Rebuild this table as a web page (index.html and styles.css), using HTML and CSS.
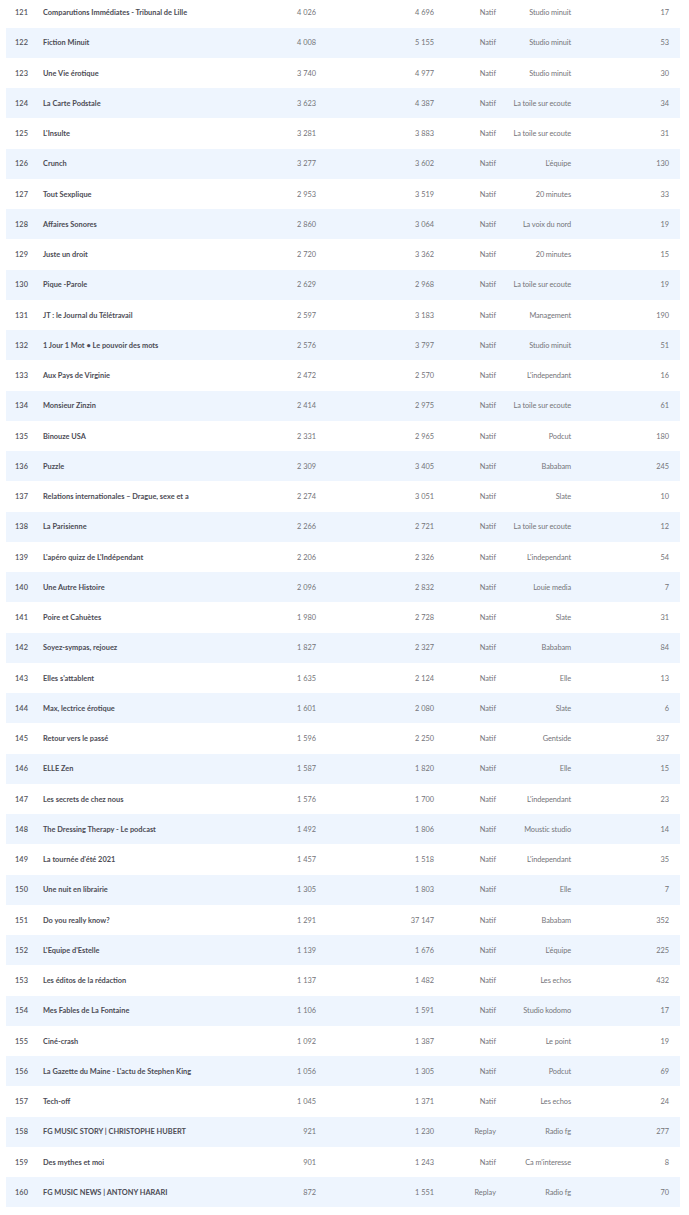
FILE: index.html
```html
<!DOCTYPE html>
<html lang="fr">
<head>
<meta charset="utf-8">
<title>Classement podcasts</title>
<link rel="stylesheet" href="styles.css">
</head>
<body>
<div class="table">
<div class="row"><span class="rank">121</span><span class="title">Comparutions Immédiates - Tribunal de Lille</span><span class="num">4&#8239;026</span><span class="num">4&#8239;696</span><span class="type">Natif</span><span class="pub">Studio minuit</span><span class="num">17</span></div>
<div class="row"><span class="rank">122</span><span class="title">Fiction Minuit</span><span class="num">4&#8239;008</span><span class="num">5&#8239;155</span><span class="type">Natif</span><span class="pub">Studio minuit</span><span class="num">53</span></div>
<div class="row"><span class="rank">123</span><span class="title">Une Vie érotique</span><span class="num">3&#8239;740</span><span class="num">4&#8239;977</span><span class="type">Natif</span><span class="pub">Studio minuit</span><span class="num">30</span></div>
<div class="row"><span class="rank">124</span><span class="title">La Carte Podstale</span><span class="num">3&#8239;623</span><span class="num">4&#8239;387</span><span class="type">Natif</span><span class="pub">La toile sur ecoute</span><span class="num">34</span></div>
<div class="row"><span class="rank">125</span><span class="title">L'Insulte</span><span class="num">3&#8239;281</span><span class="num">3&#8239;883</span><span class="type">Natif</span><span class="pub">La toile sur ecoute</span><span class="num">31</span></div>
<div class="row"><span class="rank">126</span><span class="title">Crunch</span><span class="num">3&#8239;277</span><span class="num">3&#8239;602</span><span class="type">Natif</span><span class="pub">L'équipe</span><span class="num">130</span></div>
<div class="row"><span class="rank">127</span><span class="title">Tout Sexplique</span><span class="num">2&#8239;953</span><span class="num">3&#8239;519</span><span class="type">Natif</span><span class="pub">20 minutes</span><span class="num">33</span></div>
<div class="row"><span class="rank">128</span><span class="title">Affaires Sonores</span><span class="num">2&#8239;860</span><span class="num">3&#8239;064</span><span class="type">Natif</span><span class="pub">La voix du nord</span><span class="num">19</span></div>
<div class="row"><span class="rank">129</span><span class="title">Juste un droit</span><span class="num">2&#8239;720</span><span class="num">3&#8239;362</span><span class="type">Natif</span><span class="pub">20 minutes</span><span class="num">15</span></div>
<div class="row"><span class="rank">130</span><span class="title">Pique -Parole</span><span class="num">2&#8239;629</span><span class="num">2&#8239;968</span><span class="type">Natif</span><span class="pub">La toile sur ecoute</span><span class="num">19</span></div>
<div class="row"><span class="rank">131</span><span class="title">JT : le Journal du Télétravail</span><span class="num">2&#8239;597</span><span class="num">3&#8239;183</span><span class="type">Natif</span><span class="pub">Management</span><span class="num">190</span></div>
<div class="row"><span class="rank">132</span><span class="title">1 Jour 1 Mot • Le pouvoir des mots</span><span class="num">2&#8239;576</span><span class="num">3&#8239;797</span><span class="type">Natif</span><span class="pub">Studio minuit</span><span class="num">51</span></div>
<div class="row"><span class="rank">133</span><span class="title">Aux Pays de Virginie</span><span class="num">2&#8239;472</span><span class="num">2&#8239;570</span><span class="type">Natif</span><span class="pub">L'independant</span><span class="num">16</span></div>
<div class="row"><span class="rank">134</span><span class="title">Monsieur Zinzin</span><span class="num">2&#8239;414</span><span class="num">2&#8239;975</span><span class="type">Natif</span><span class="pub">La toile sur ecoute</span><span class="num">61</span></div>
<div class="row"><span class="rank">135</span><span class="title">Binouze USA</span><span class="num">2&#8239;331</span><span class="num">2&#8239;965</span><span class="type">Natif</span><span class="pub">Podcut</span><span class="num">180</span></div>
<div class="row"><span class="rank">136</span><span class="title">Puzzle</span><span class="num">2&#8239;309</span><span class="num">3&#8239;405</span><span class="type">Natif</span><span class="pub">Bababam</span><span class="num">245</span></div>
<div class="row"><span class="rank">137</span><span class="title">Relations internationales – Drague, sexe et a</span><span class="num">2&#8239;274</span><span class="num">3&#8239;051</span><span class="type">Natif</span><span class="pub">Slate</span><span class="num">10</span></div>
<div class="row"><span class="rank">138</span><span class="title">La Parisienne</span><span class="num">2&#8239;266</span><span class="num">2&#8239;721</span><span class="type">Natif</span><span class="pub">La toile sur ecoute</span><span class="num">12</span></div>
<div class="row"><span class="rank">139</span><span class="title">L'apéro quizz de L'Indépendant</span><span class="num">2&#8239;206</span><span class="num">2&#8239;326</span><span class="type">Natif</span><span class="pub">L'independant</span><span class="num">54</span></div>
<div class="row"><span class="rank">140</span><span class="title">Une Autre Histoire</span><span class="num">2&#8239;096</span><span class="num">2&#8239;832</span><span class="type">Natif</span><span class="pub">Louie media</span><span class="num">7</span></div>
<div class="row"><span class="rank">141</span><span class="title">Poire et Cahuètes</span><span class="num">1&#8239;980</span><span class="num">2&#8239;728</span><span class="type">Natif</span><span class="pub">Slate</span><span class="num">31</span></div>
<div class="row"><span class="rank">142</span><span class="title">Soyez-sympas, rejouez</span><span class="num">1&#8239;827</span><span class="num">2&#8239;327</span><span class="type">Natif</span><span class="pub">Bababam</span><span class="num">84</span></div>
<div class="row"><span class="rank">143</span><span class="title">Elles s'attablent</span><span class="num">1&#8239;635</span><span class="num">2&#8239;124</span><span class="type">Natif</span><span class="pub">Elle</span><span class="num">13</span></div>
<div class="row"><span class="rank">144</span><span class="title">Max, lectrice érotique</span><span class="num">1&#8239;601</span><span class="num">2&#8239;080</span><span class="type">Natif</span><span class="pub">Slate</span><span class="num">6</span></div>
<div class="row"><span class="rank">145</span><span class="title">Retour vers le passé</span><span class="num">1&#8239;596</span><span class="num">2&#8239;250</span><span class="type">Natif</span><span class="pub">Gentside</span><span class="num">337</span></div>
<div class="row"><span class="rank">146</span><span class="title">ELLE Zen</span><span class="num">1&#8239;587</span><span class="num">1&#8239;820</span><span class="type">Natif</span><span class="pub">Elle</span><span class="num">15</span></div>
<div class="row"><span class="rank">147</span><span class="title">Les secrets de chez nous</span><span class="num">1&#8239;576</span><span class="num">1&#8239;700</span><span class="type">Natif</span><span class="pub">L'independant</span><span class="num">23</span></div>
<div class="row"><span class="rank">148</span><span class="title">The Dressing Therapy - Le podcast</span><span class="num">1&#8239;492</span><span class="num">1&#8239;806</span><span class="type">Natif</span><span class="pub">Moustic studio</span><span class="num">14</span></div>
<div class="row"><span class="rank">149</span><span class="title">La tournée d'été 2021</span><span class="num">1&#8239;457</span><span class="num">1&#8239;518</span><span class="type">Natif</span><span class="pub">L'independant</span><span class="num">35</span></div>
<div class="row"><span class="rank">150</span><span class="title">Une nuit en librairie</span><span class="num">1&#8239;305</span><span class="num">1&#8239;803</span><span class="type">Natif</span><span class="pub">Elle</span><span class="num">7</span></div>
<div class="row"><span class="rank">151</span><span class="title">Do you really know?</span><span class="num">1&#8239;291</span><span class="num">37&#8239;147</span><span class="type">Natif</span><span class="pub">Bababam</span><span class="num">352</span></div>
<div class="row"><span class="rank">152</span><span class="title">L'Equipe d'Estelle</span><span class="num">1&#8239;139</span><span class="num">1&#8239;676</span><span class="type">Natif</span><span class="pub">L'équipe</span><span class="num">225</span></div>
<div class="row"><span class="rank">153</span><span class="title">Les éditos de la rédaction</span><span class="num">1&#8239;137</span><span class="num">1&#8239;482</span><span class="type">Natif</span><span class="pub">Les echos</span><span class="num">432</span></div>
<div class="row"><span class="rank">154</span><span class="title">Mes Fables de La Fontaine</span><span class="num">1&#8239;106</span><span class="num">1&#8239;591</span><span class="type">Natif</span><span class="pub">Studio kodomo</span><span class="num">17</span></div>
<div class="row"><span class="rank">155</span><span class="title">Ciné-crash</span><span class="num">1&#8239;092</span><span class="num">1&#8239;387</span><span class="type">Natif</span><span class="pub">Le point</span><span class="num">19</span></div>
<div class="row"><span class="rank">156</span><span class="title">La Gazette du Maine - L'actu de Stephen King</span><span class="num">1&#8239;056</span><span class="num">1&#8239;305</span><span class="type">Natif</span><span class="pub">Podcut</span><span class="num">69</span></div>
<div class="row"><span class="rank">157</span><span class="title">Tech-off</span><span class="num">1&#8239;045</span><span class="num">1&#8239;371</span><span class="type">Natif</span><span class="pub">Les echos</span><span class="num">24</span></div>
<div class="row"><span class="rank">158</span><span class="title">FG MUSIC STORY | CHRISTOPHE HUBERT</span><span class="num">921</span><span class="num">1&#8239;230</span><span class="type">Replay</span><span class="pub">Radio fg</span><span class="num">277</span></div>
<div class="row"><span class="rank">159</span><span class="title">Des mythes et moi</span><span class="num">901</span><span class="num">1&#8239;243</span><span class="type">Natif</span><span class="pub">Ca m'interesse</span><span class="num">8</span></div>
<div class="row"><span class="rank">160</span><span class="title">FG MUSIC NEWS | ANTONY HARARI</span><span class="num">872</span><span class="num">1&#8239;551</span><span class="type">Replay</span><span class="pub">Radio fg</span><span class="num">70</span></div>
</div>
</body>
</html>
```

FILE: styles.css
```css
html, body {
  margin: 0;
  padding: 0;
  background: #ffffff;
}

body {
  font-family: Lato, "Noto Sans", sans-serif;
  font-size: 7.4px;
  color: #6b6b70;
}

.table {
  margin: -2.6px 9px 0 6px;
  display: flex;
  flex-direction: column;
}

.row {
  display: grid;
  grid-template-columns: 31px 213px 66px 118px 62px 75px 98px;
  align-items: center;
  height: 30.26px;
  padding-right: 11px;
  white-space: nowrap;
}

.row:nth-child(even) {
  background: #eef5fe;
}

.rank {
  text-align: center;
  color: #55555c;
  font-weight: 600;
}

.title {
  padding-left: 6px;
  color: #4c4c55;
  font-weight: 700;
  overflow: hidden;
}

.num,
.type {
  text-align: right;
  color: #75757a;
}

.pub {
  text-align: right;
  color: #75757a;
  letter-spacing: -0.1px;
  padding-right: 1px;
  margin-right: -1px;
}
```
